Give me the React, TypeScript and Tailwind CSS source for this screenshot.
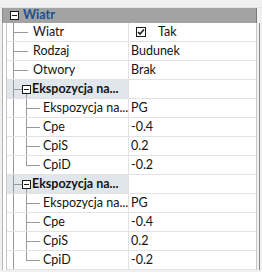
import React from "react";

type Row =
  | { kind: "l1"; name: string; value: string; check?: boolean }
  | { kind: "cat2"; name: string }
  | { kind: "l2"; name: string; value: string; last?: boolean };

const rows: Row[] = [
  { kind: "l1", name: "Wiatr", value: "Tak", check: true },
  { kind: "l1", name: "Rodzaj", value: "Budunek" },
  { kind: "l1", name: "Otwory", value: "Brak" },
  { kind: "cat2", name: "Ekspozycja na..." },
  { kind: "l2", name: "Ekspozycja na...", value: "PG" },
  { kind: "l2", name: "Cpe", value: "-0.4" },
  { kind: "l2", name: "CpiS", value: "0.2" },
  { kind: "l2", name: "CpiD", value: "-0.2", last: true },
  { kind: "cat2", name: "Ekspozycja na..." },
  { kind: "l2", name: "Ekspozycja na...", value: "PG" },
  { kind: "l2", name: "Cpe", value: "-0.4" },
  { kind: "l2", name: "CpiS", value: "0.2" },
  { kind: "l2", name: "CpiD", value: "-0.2", last: true },
];

function MinusBox() {
  return (
    <svg width="9" height="9" viewBox="0 0 9 9" className="block">
      <rect x="0.5" y="0.5" width="8" height="8" fill="#ffffff" stroke="#1a1a1a" />
      <line x1="2" y1="4.5" x2="7" y2="4.5" stroke="#1a1a1a" />
    </svg>
  );
}

function CheckBox() {
  return (
    <svg width="10" height="10" viewBox="0 0 10 10" className="block">
      <rect x="0.5" y="0.5" width="9" height="9" fill="#ffffff" stroke="#1a1a1a" />
      <path d="M2 5 L4 7 L8 2.5" fill="none" stroke="#1a1a1a" strokeWidth="1.6" />
    </svg>
  );
}

function Gutter() {
  return (
    <>
      <div className="w-[2px] shrink-0" />
      <div className="w-[1px] shrink-0 bg-[#b4b4b4]" />
      <div className="w-[3px] shrink-0 bg-white" />
      <div className="w-[1px] shrink-0 bg-[#c8c8c8]" />
    </>
  );
}

export default function App() {
  return (
    <div
      className="w-[262px] h-[272px] overflow-hidden bg-[#f0f0f0] text-[12.5px] text-[#141414]"
      style={{ fontFamily: 'Lato, "Liberation Sans", Arial, sans-serif' }}
    >
      <div className="h-[8px] border-b border-[#e4e4e4]" />
      {/* Wiatr header */}
      <div className="flex h-[15px]">
        <div className="w-[2px] shrink-0" />
        <div className="w-[1px] shrink-0 bg-[#8a8a8a]" />
        <div className="w-[253px] flex items-center bg-[#a3a3a3] pl-[7px]">
          <MinusBox />
          <span className="ml-[4px] font-bold text-[#1d4f8e] leading-none">Wiatr</span>
        </div>
        <div className="w-[1px] shrink-0 bg-[#7a7a7a]" />
      </div>
      {rows.map((r, i) => (
        <div key={i} className="flex h-[19px]">
          <Gutter />
          <div
            className={`relative w-[122px] shrink-0 border-b border-r border-[#e2e2e2] flex items-center overflow-hidden ${
              r.kind === "cat2" ? "bg-[#e1e6ec]" : "bg-white"
            }`}
          >
            <span className="absolute left-[6px] top-0 bottom-[-1px] w-[1px] bg-[#9a9a9a]" />
            {r.kind === "l1" && (
              <>
                <span className="absolute left-[6px] top-[9px] w-[15px] h-[1px] bg-[#9a9a9a]" />
                <span className="pl-[26px] whitespace-nowrap">{r.name}</span>
              </>
            )}
            {r.kind === "cat2" && (
              <>
                <span className="absolute left-[6px] top-[9px] w-[9px] h-[1px] bg-[#9a9a9a]" />
                <span className="absolute left-[19px] top-[14px] bottom-[-1px] w-[1px] bg-[#9a9a9a]" />
                <span className="absolute left-[15px] top-[5px]">
                  <MinusBox />
                </span>
                <span className="pl-[25px] whitespace-nowrap font-bold">{r.name}</span>
              </>
            )}
            {r.kind === "l2" && (
              <>
                <span
                  className={`absolute left-[19px] top-0 w-[1px] bg-[#9a9a9a] ${
                    r.last ? "h-[10px]" : "bottom-[-1px]"
                  }`}
                />
                <span className="absolute left-[19px] top-[9px] w-[14px] h-[1px] bg-[#9a9a9a]" />
                <span className="pl-[36px] whitespace-nowrap">{r.name}</span>
              </>
            )}
          </div>
          <div className="w-[127px] shrink-0 border-b border-[#e2e2e2] bg-white flex items-center pl-[2px] whitespace-nowrap">
            {r.kind === "l1" && r.check ? (
              <>
                <span className="ml-[5px]">
                  <CheckBox />
                </span>
                <span className="ml-[12px]">{r.value}</span>
              </>
            ) : r.kind !== "cat2" ? (
              <span>{r.value}</span>
            ) : null}
          </div>
          <div className="w-[1px] shrink-0 bg-[#c8c8c8]" />
          <div className="w-[2px] shrink-0" />
          <div className="w-[1px] shrink-0 bg-[#8a8a8a]" />
        </div>
      ))}
    </div>
  );
}
